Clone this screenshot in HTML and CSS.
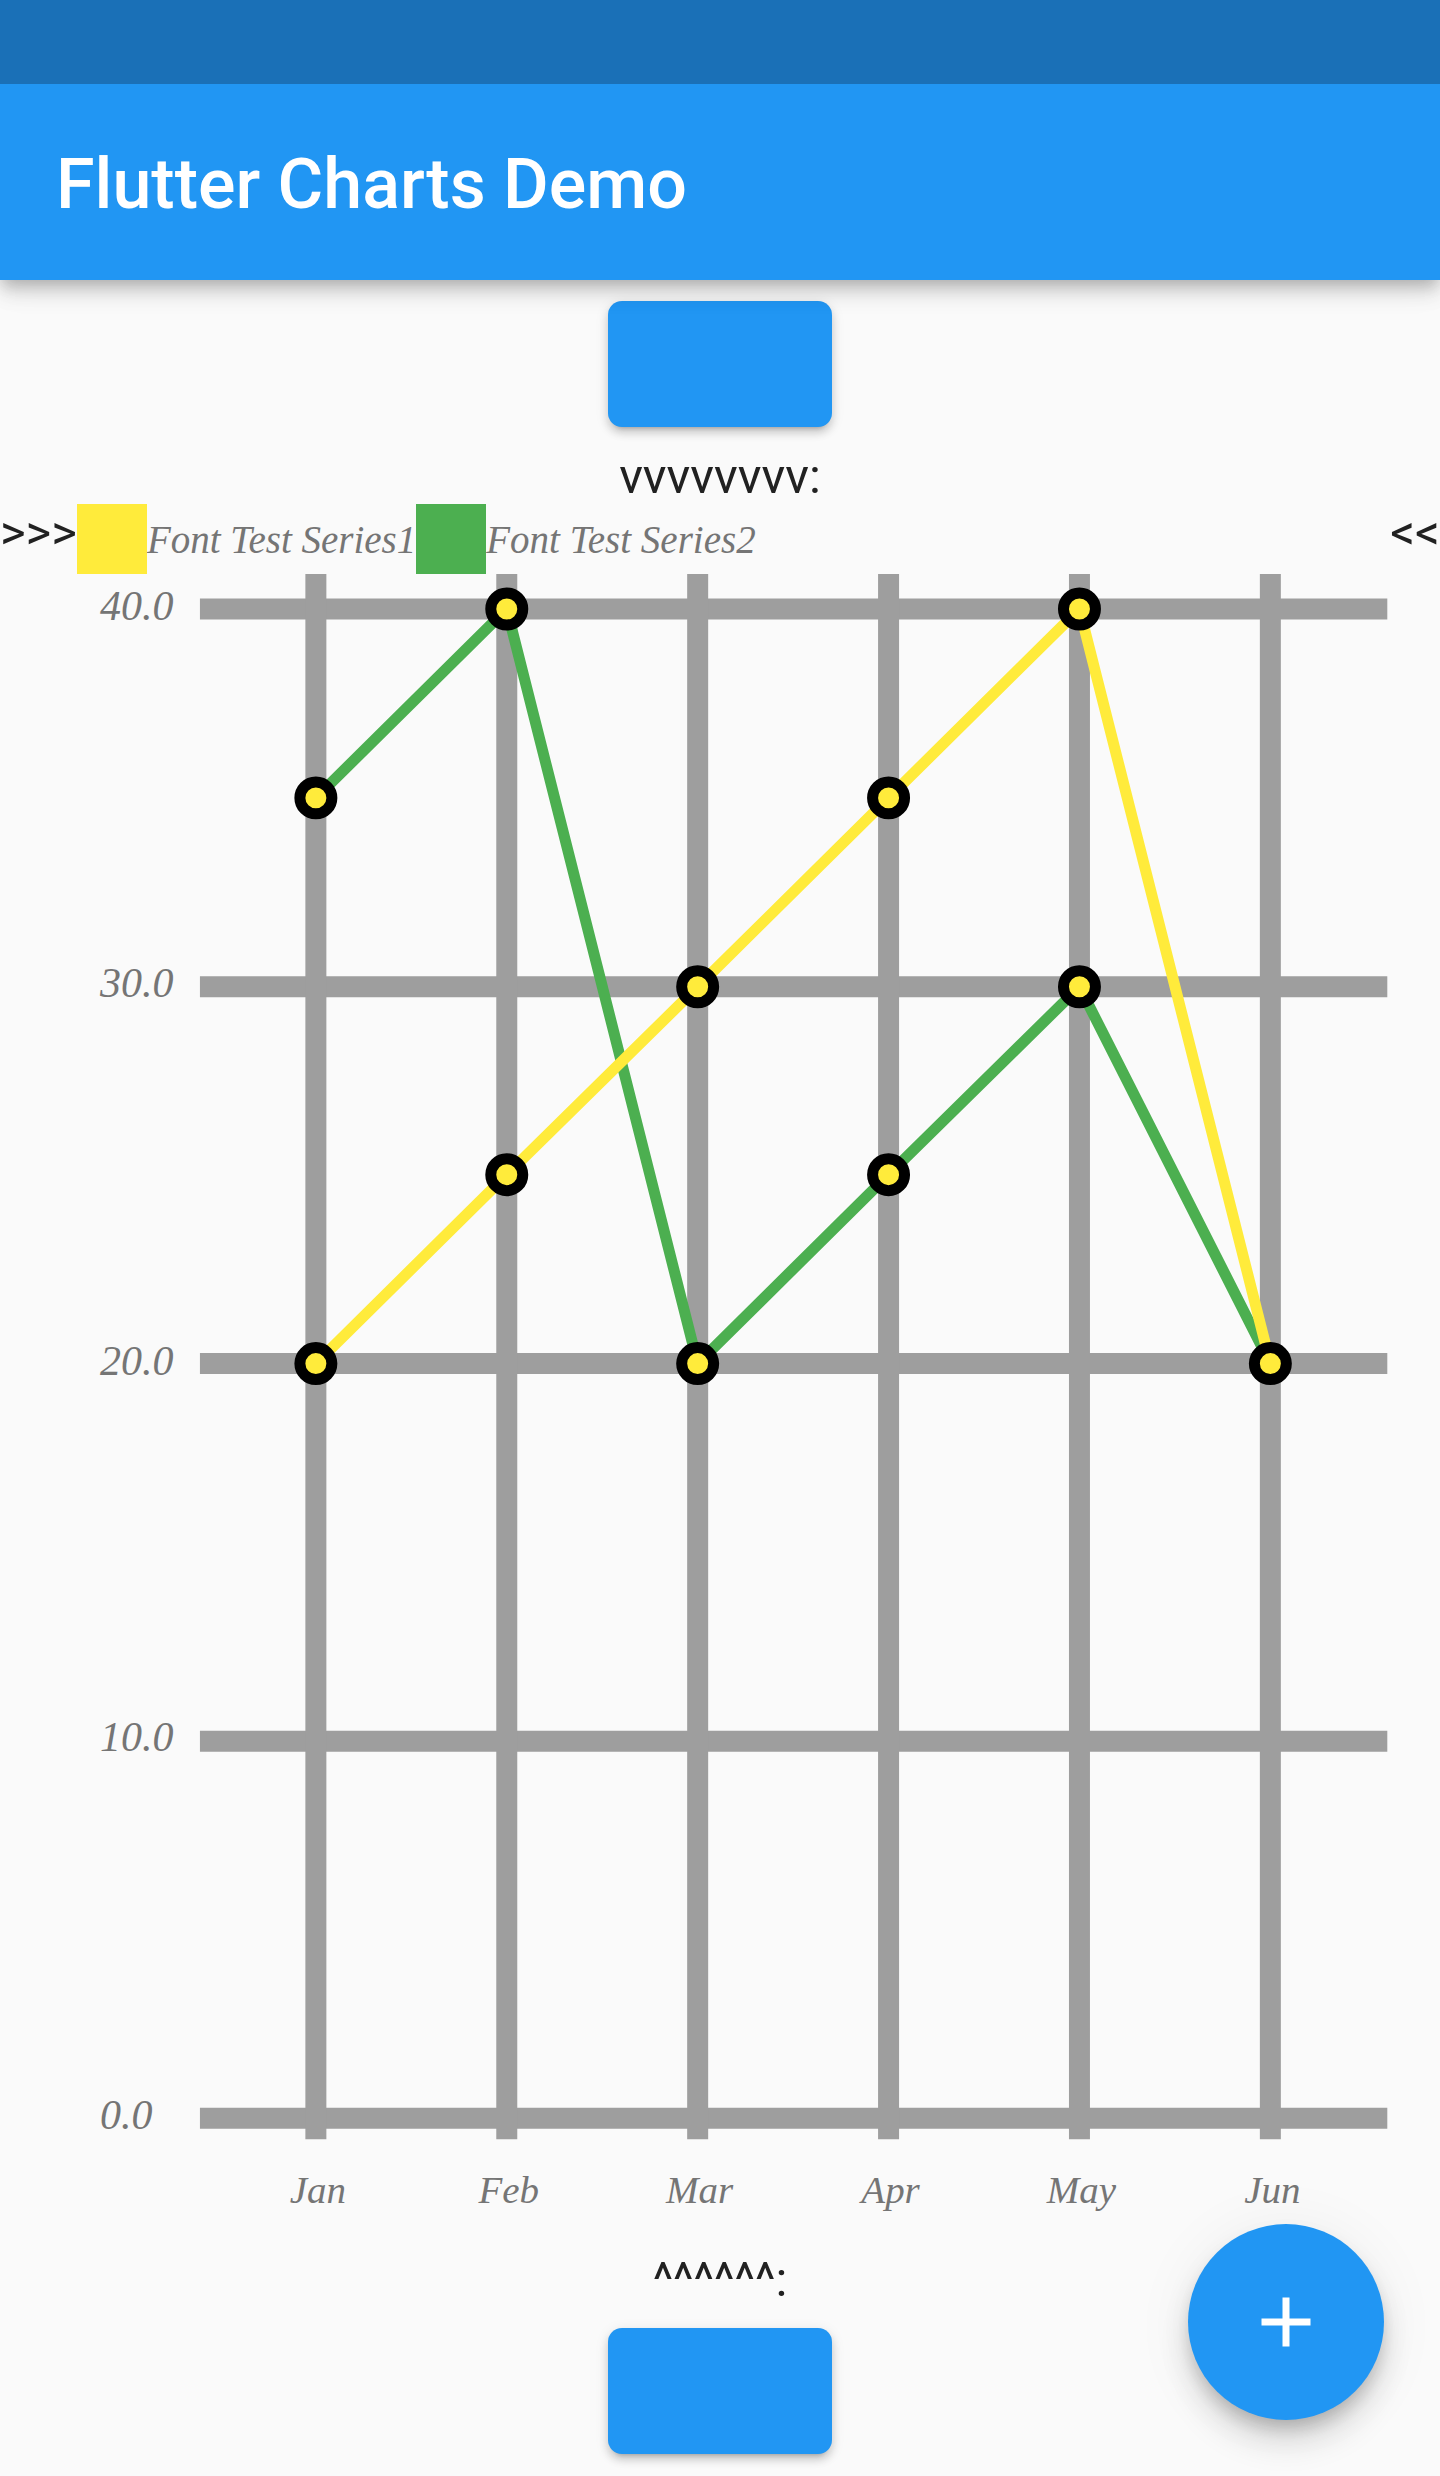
FILE: index.html
```html
<!DOCTYPE html>
<html lang="en">
<head>
<meta charset="utf-8">
<meta name="viewport" content="width=device-width, initial-scale=1">
<title>Flutter Charts Demo</title>
<link rel="stylesheet" href="styles.css">
</head>
<body>
<header class="app-bar">
  <div class="status-bar"></div>
  <h1 class="app-title">Flutter Charts Demo</h1>
</header>
<main class="content">
  <div class="button-row"><button class="raised-button" type="button" aria-label="Update chart"></button></div>
  <p class="marker">vvvvvvvv:</p>
  <div class="chart-row">
    <span class="marker">&gt;&gt;&gt;</span>
    <section class="chart">
      <ul class="legend">
        <li class="legend-item"><span class="swatch swatch-yellow"></span><span class="legend-label">Font Test Series1</span></li>
        <li class="legend-item"><span class="swatch swatch-green"></span><span class="legend-label">Font Test Series2</span></li>
      </ul>
      <svg class="plot" viewBox="77 574 1314 1678" role="img" aria-label="Line chart">
        <g class="grid">
          <path d="M200 609H1388M200 987H1388M200 1364H1388M200 1742H1388M200 2119H1388"/>
          <path d="M316 574V2140M507 574V2140M698 574V2140M889 574V2140M1080 574V2140M1271 574V2140"/>
        </g>
        <polyline class="line line-green" points="316,798 507,609 698,1364 889,1175 1080,987 1271,1364"/>
        <polyline class="line line-yellow" points="316,1364 507,1175 698,987 889,798 1080,609 1271,1364"/>
        <g class="points">
          <circle cx="316" cy="798" r="16"/><circle cx="507" cy="609" r="16"/><circle cx="698" cy="1364" r="16"/>
          <circle cx="889" cy="1175" r="16"/><circle cx="1080" cy="987" r="16"/><circle cx="1271" cy="1364" r="16"/>
          <circle cx="316" cy="1364" r="16"/><circle cx="507" cy="1175" r="16"/><circle cx="698" cy="987" r="16"/>
          <circle cx="889" cy="798" r="16"/><circle cx="1080" cy="609" r="16"/>
        </g>
        <g class="y-labels">
          <text x="100" y="620">40.0</text>
          <text x="100" y="997">30.0</text>
          <text x="100" y="1375">20.0</text>
          <text x="100" y="1752">10.0</text>
          <text x="100" y="2130">0.0</text>
        </g>
        <g class="x-labels">
          <text x="318" y="2204">Jan</text>
          <text x="509" y="2204">Feb</text>
          <text x="700" y="2204">Mar</text>
          <text x="891" y="2204">Apr</text>
          <text x="1082" y="2204">May</text>
          <text x="1273" y="2204">Jun</text>
        </g>
      </svg>
    </section>
    <span class="marker">&lt;&lt;</span>
  </div>
  <p class="marker">^^^^^^:</p>
  <div class="button-row"><button class="raised-button" type="button" aria-label="Update chart"></button></div>
</main>
<button class="fab" type="button" aria-label="New random data">
  <svg class="fab-icon" viewBox="0 0 24 24" aria-hidden="true"><path d="M19 13h-6v6h-2v-6H5v-2h6V5h2v6h6z"/></svg>
</button>
</body>
</html>
```

FILE: styles.css
```css
* { box-sizing: border-box; }

body {
  margin: 0;
  background: #fafafa;
  color: #212121;
  font-family: Roboto, sans-serif;
}

.app-bar {
  position: relative;
  z-index: 1;
  background: #2196f3;
  box-shadow: 0 7px 14px -3px rgba(0, 0, 0, .2), 0 14px 18px rgba(0, 0, 0, .1), 0 4px 35px rgba(0, 0, 0, .08);
}

.status-bar { height: 84px; background: #1a70b7; }

.app-title {
  height: 196px;
  margin: 0;
  padding: 0 56px;
  color: #fff;
  font-size: 70px;
  font-weight: 500;
  line-height: 200px;
}

.button-row { display: flex; justify-content: center; padding: 21px 0; }

.raised-button {
  width: 224px;
  height: 126px;
  border: 0;
  border-radius: 14px;
  background: #2196f3;
  box-shadow: 0 8px 4px -7px rgba(0, 0, 0, .2), 0 6px 8px rgba(0, 0, 0, .14), 0 3px 14px rgba(0, 0, 0, .1);
}

.marker {
  height: 56px;
  margin: 0;
  font-size: 49px;
  line-height: 58px;
  text-align: center;
}

.chart-row { display: flex; align-items: flex-start; }

.chart { flex: 1; min-width: 0; }

.legend {
  display: flex;
  margin: 0;
  padding: 0;
  list-style: none;
}

.legend-item { display: flex; align-items: center; }

.swatch { width: 70px; height: 70px; }
.swatch-yellow { background: #ffeb3b; }
.swatch-green { background: #4caf50; }

.legend-label,
.y-labels,
.x-labels {
  color: #757575;
  fill: #757575;
  font-family: "Liberation Serif", serif;
  font-style: italic;
}

.legend-label, .x-labels { font-size: 39px; white-space: nowrap; }
.y-labels { font-size: 42px; }
.x-labels { text-anchor: middle; }

.plot { display: block; width: 100%; height: auto; }

.grid { fill: none; stroke: #9e9e9e; stroke-width: 21; }
.line { fill: none; stroke-width: 11; }
.line-green { stroke: #4caf50; }
.line-yellow { stroke: #ffeb3b; }
.points { fill: #ffeb3b; stroke: #000; stroke-width: 11; }

.fab {
  position: fixed;
  right: 56px;
  bottom: 56px;
  display: flex;
  align-items: center;
  justify-content: center;
  width: 196px;
  height: 196px;
  padding: 0;
  border: 0;
  border-radius: 50%;
  background: #2196f3;
  box-shadow: 0 11px 18px -4px rgba(0, 0, 0, .2), 0 21px 35px rgba(0, 0, 0, .14), 0 4px 63px rgba(0, 0, 0, .06);
}

.fab-icon { width: 84px; height: 84px; fill: #fff; }
```
